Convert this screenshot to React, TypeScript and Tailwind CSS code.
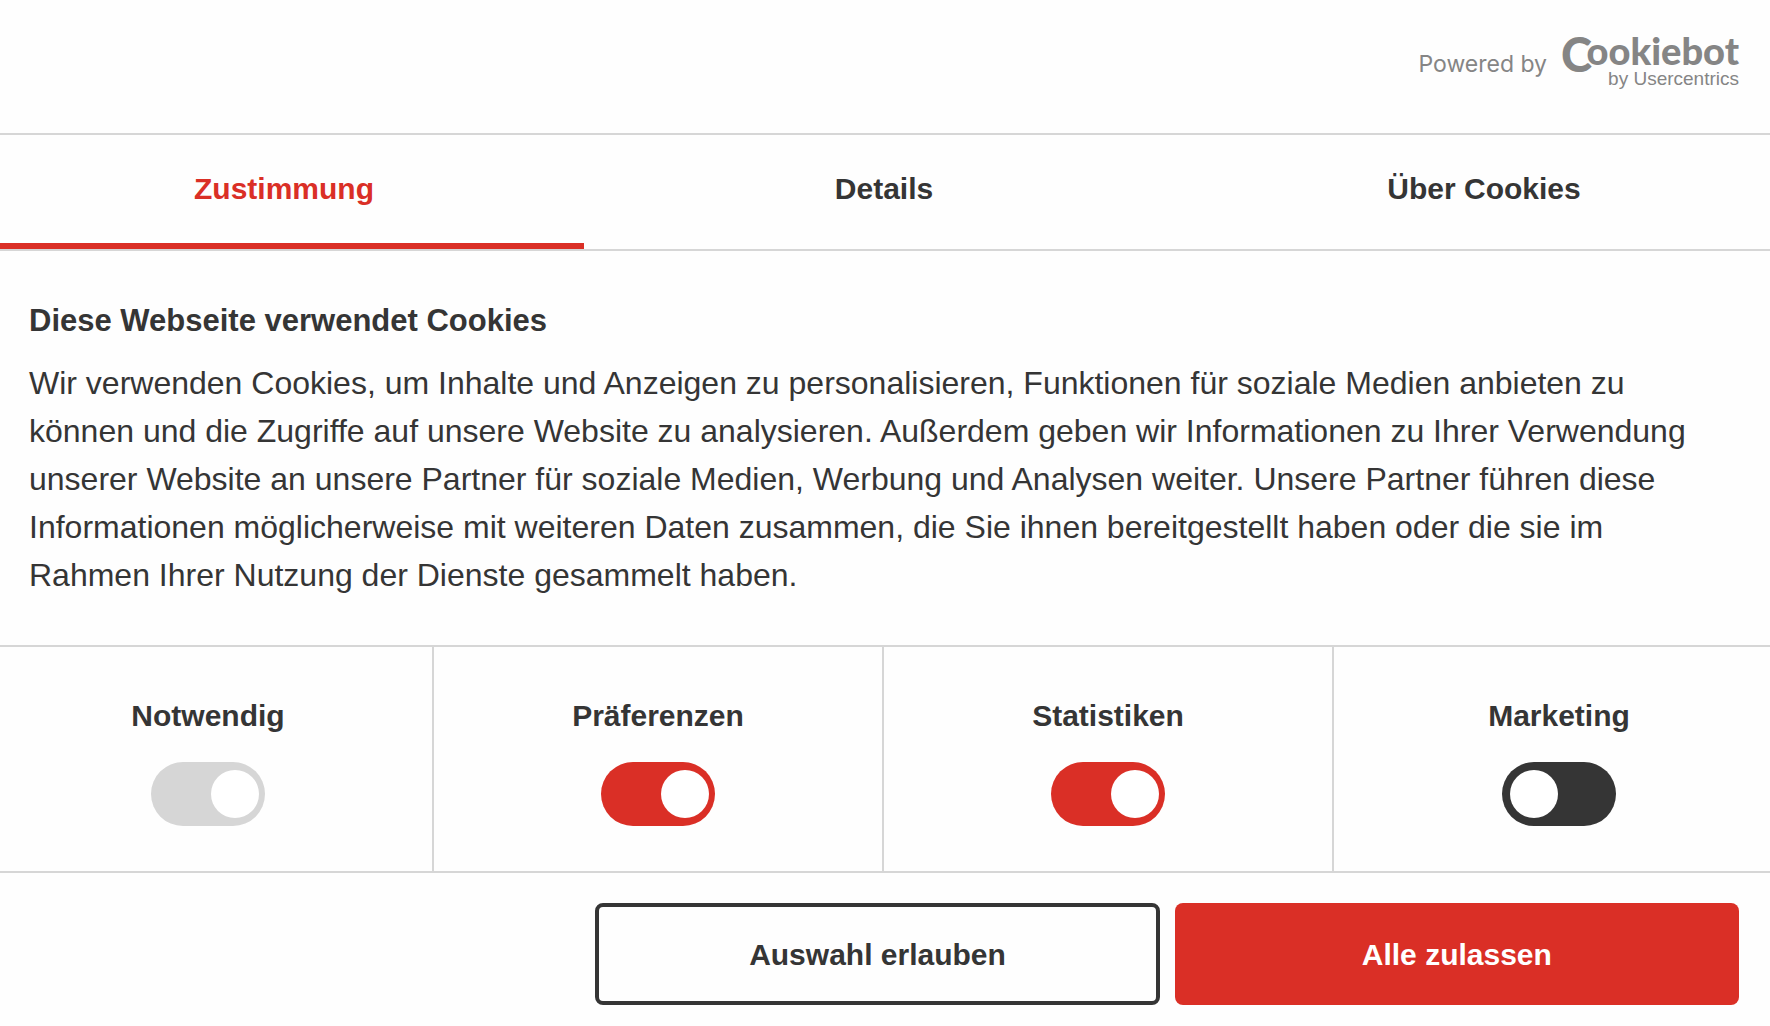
import { useState } from "react";

const tabs = ["Zustimmung", "Details", "Über Cookies"];

const categories = [
  { id: "necessary", label: "Notwendig", checked: true, locked: true },
  { id: "preferences", label: "Präferenzen", checked: true, locked: false },
  { id: "statistics", label: "Statistiken", checked: true, locked: false },
  { id: "marketing", label: "Marketing", checked: false, locked: false },
];

function CookiebotLogo() {
  return (
    <svg
      width="176"
      height="50"
      viewBox="0 0 176 50"
      fill="#858585"
      className="overflow-visible"
      role="img"
      aria-label="Cookiebot by Usercentrics"
    >
      <text x="-2" y="35" fontFamily="Lato, sans-serif" fontWeight="900" fontSize="47">
        C
      </text>
      <text x="176" y="28" textAnchor="end" fontFamily="Lato, sans-serif" fontWeight="900" fontSize="38">
        ookiebot
      </text>
      <text x="176" y="48" textAnchor="end" fontFamily="Liberation Sans, Arial, sans-serif" fontSize="19">
        by Usercentrics
      </text>
    </svg>
  );
}

function Category({ id, label, checked, locked }: (typeof categories)[number]) {
  return (
    <div className="flex flex-col items-center border-r-2 border-[#d6d6d6] pt-[49px] pb-[45px] last:border-r-0">
      <label htmlFor={id} className="text-[30px] leading-10 font-bold">
        {label}
      </label>
      <span className="relative mt-[26px] block h-16 w-[114px]">
        <input
          id={id}
          type="checkbox"
          role="switch"
          defaultChecked={checked}
          disabled={locked}
          className="peer block h-full w-full cursor-pointer appearance-none rounded-full bg-[#353535] checked:bg-[#da2f26] disabled:cursor-default disabled:bg-[#d6d6d6]"
        />
        <span className="pointer-events-none absolute top-2 left-2 size-12 rounded-full bg-white peer-checked:left-[60px]" />
      </span>
    </div>
  );
}

export default function App() {
  const [active, setActive] = useState(0);

  return (
    <div className="min-h-screen overflow-x-hidden bg-[#fefefe] font-['Liberation_Sans',Arial,sans-serif] text-[#353535]">
      <header className="flex items-start justify-end gap-4 border-b-2 border-[#d6d6d6] pt-[37px] pr-[31px] pb-[46px]">
        <span className="pt-[13px] font-[Inter,sans-serif] text-[23px] leading-7 text-[#858585]">
          Powered by
        </span>
        <a href="#cookiebot">
          <CookiebotLogo />
        </a>
      </header>

      <div role="tablist" className="-mr-[14px] -ml-4 grid grid-cols-3 border-b-2 border-[#d6d6d6]">
        {tabs.map((tab, i) => (
          <button
            key={tab}
            type="button"
            role="tab"
            aria-selected={i === active}
            onClick={() => setActive(i)}
            className={
              i === active
                ? "h-[114px] border-b-[6px] border-[#da2f26] text-[30px] leading-10 font-bold text-[#da2f26]"
                : "h-[114px] border-b-[6px] border-transparent text-[30px] leading-10 font-bold"
            }
          >
            {tab}
          </button>
        ))}
      </div>

      <main className="pt-[50px] pr-[60px] pb-[45px] pl-[29px]">
        <h2 className="text-[31px] leading-10 font-bold">Diese Webseite verwendet Cookies</h2>
        <p className="mt-[18px] text-[32px] leading-[48px]">
          Wir verwenden Cookies, um Inhalte und Anzeigen zu personalisieren, Funktionen für soziale
          Medien anbieten zu können und die Zugriffe auf unsere Website zu analysieren. Außerdem
          geben wir Informationen zu Ihrer Verwendung unserer Website an unsere Partner für soziale
          Medien, Werbung und Analysen weiter. Unsere Partner führen diese Informationen
          möglicherweise mit weiteren Daten zusammen, die Sie ihnen bereitgestellt haben oder die
          sie im Rahmen Ihrer Nutzung der Dienste gesammelt haben.
        </p>
      </main>

      <div className="mt-px -mr-[14px] -ml-4 grid grid-cols-4 border-y-2 border-[#d6d6d6]">
        {categories.map((category) => (
          <Category key={category.id} {...category} />
        ))}
      </div>

      <footer className="grid grid-cols-3 gap-[15px] pt-[30px] pr-[31px] pb-[22px] pl-4">
        <button
          type="button"
          className="col-start-2 h-[102px] rounded-lg border-4 border-[#353535] text-[30px] font-bold"
        >
          Auswahl erlauben
        </button>
        <button
          type="button"
          className="h-[102px] rounded-lg bg-[#da2f26] text-[30px] font-bold text-white"
        >
          Alle zulassen
        </button>
      </footer>
    </div>
  );
}
